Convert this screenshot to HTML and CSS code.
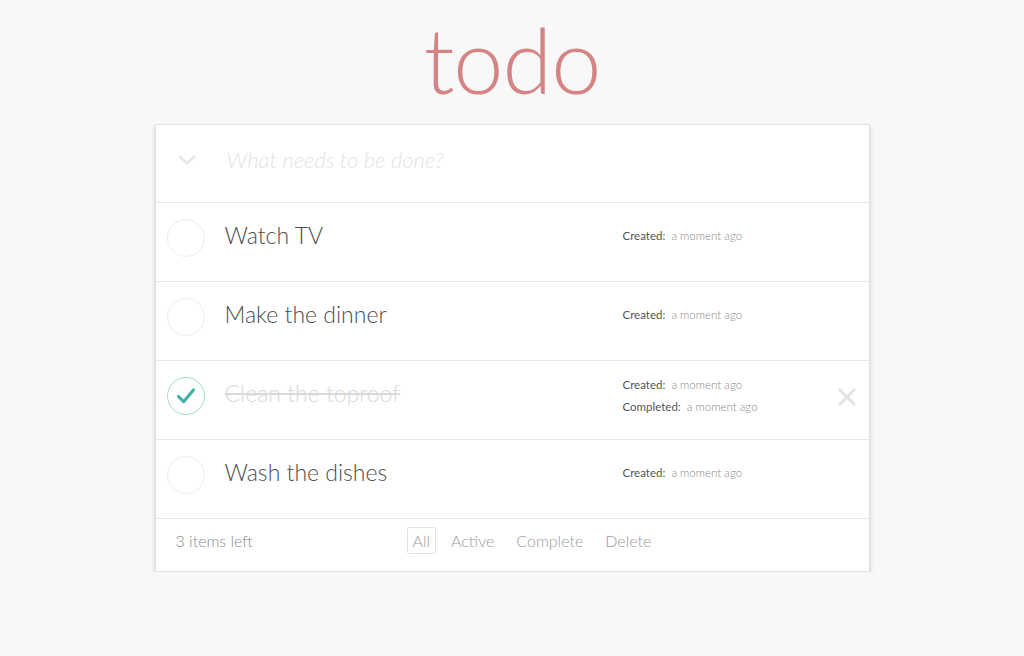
FILE: index.html
```html
<!DOCTYPE html>
<html>
<head>
<meta charset="utf-8">
<link rel="stylesheet" href="styles.css">
</head>
<body>
<div class="app">
  <h1 class="title">todo</h1>
  <section class="card">
    <header class="new-row">
      <span class="toggle-all">
        <svg width="20" height="12" viewBox="0 0 20 12"><path d="M2 2 L10 9 L18 2" fill="none" stroke="#e6e6e6" stroke-width="2.5"/></svg>
      </span>
      <input class="new-todo" placeholder="What needs to be done?">
    </header>
    <ul class="list">
      <li class="item">
        <span class="check"></span>
        <span class="label">Watch TV</span>
        <div class="meta"><div><b>Created:</b> a moment ago</div></div>
        <span class="destroy"></span>
      </li>
      <li class="item">
        <span class="check"></span>
        <span class="label">Make the dinner</span>
        <div class="meta"><div><b>Created:</b> a moment ago</div></div>
        <span class="destroy"></span>
      </li>
      <li class="item done">
        <span class="check on">
          <svg width="38" height="38" viewBox="0 0 38 38"><path d="M11 19.5 L16.5 25 L27 12.5" fill="none" stroke="#3bb3a7" stroke-width="3.2" stroke-linecap="round" stroke-linejoin="round"/></svg>
        </span>
        <span class="label">Clean the toproof</span>
        <div class="meta"><div><b>Created:</b> a moment ago</div><div><b>Completed:</b> a moment ago</div></div>
        <span class="destroy">
          <svg width="22" height="22" viewBox="0 0 22 22"><path d="M3 3 L19 19 M19 3 L3 19" stroke="#e3e3e3" stroke-width="3" fill="none"/></svg>
        </span>
      </li>
      <li class="item">
        <span class="check"></span>
        <span class="label">Wash the dishes</span>
        <div class="meta"><div><b>Created:</b> a moment ago</div></div>
        <span class="destroy"></span>
      </li>
    </ul>
    <footer class="footer">
      <span class="count">3 items left</span>
      <nav class="filters">
        <a class="filter selected">All</a>
        <a class="filter">Active</a>
        <a class="filter">Complete</a>
        <a class="filter">Delete</a>
      </nav>
    </footer>
  </section>
</div>
</body>
</html>
```
FILE: styles.css
```css
html, body { margin: 0; padding: 0; }
body {
  background: #f8f8f8;
  font-family: Lato, "Open Sans", sans-serif;
  color: #4d4d4d;
}
.app {
  width: 715px;
  margin: 0 auto;
  padding-top: 9px;
}
.title {
  margin: 0;
  height: 115px;
  text-align: center;
  font-weight: 300;
  font-size: 90px;
  line-height: 100px;
  color: #d48484;
  letter-spacing: -1px;
}
.card {
  background: #fff;
  border: 1px solid #e3e3e3;
  box-shadow: 0 1px 2px rgba(0,0,0,0.08), 0 4px 5px rgba(0,0,0,0.14);
}
.new-row {
  display: flex;
  align-items: center;
  height: 76px;
  padding-bottom: 1px;
  border-bottom: 1px solid #e6e6e6;
}
.toggle-all {
  width: 60px;
  display: flex;
  justify-content: center;
  padding-left: 1px;
  margin-top: -6px;
}
.new-todo {
  border: 0;
  outline: 0;
  flex: 1;
  margin-left: 8px;
  margin-top: -8px;
  font-family: inherit;
  font-size: 22px;
  font-style: italic;
  font-weight: 300;
  color: #4d4d4d;
  background: transparent;
}
.new-todo::placeholder { color: #e3e3e3; }
.list { list-style: none; margin: 0; padding: 0; }
.item {
  display: flex;
  align-items: center;
  height: 70px;
  padding-bottom: 8px;
  border-bottom: 1px solid #e6e6e6;
}
.check {
  width: 36px;
  height: 36px;
  margin-left: 11px;
  border: 1px solid #ededed;
  border-radius: 50%;
  display: flex;
  align-items: center;
  justify-content: center;
  flex: none;
}
.check svg { width: 36px; height: 36px; }
.check.on { border-color: #a5dcd6; }
.label {
  margin-left: 20px;
  width: 398px;
  font-size: 23px;
  font-weight: 300;
  color: #4d4d4d;
  margin-top: -7px;
}
.done .label { color: #d9d9d9; text-decoration: line-through; }
.meta {
  width: 201px;
  font-size: 11.5px;
  font-weight: 300;
  color: #8a8a8a;
  margin-top: -5px;
}
.done .meta { margin-top: 0px; }
.meta div { line-height: 22px; }
.meta b { font-weight: 400; color: #555; margin-right: 3px; }
.destroy {
  margin-left: 12px;
  width: 22px;
  height: 22px;
  display: flex;
  margin-top: 2px;
}
.footer {
  display: flex;
  align-items: center;
  height: 52px;
}
.count {
  margin-left: 20px;
  width: 231px;
  font-size: 16px;
  font-weight: 300;
  color: #8a8a8a;
  margin-top: -10px;
}
.filters { display: flex; gap: 8px; margin-top: -10px; }
.filter {
  font-size: 16px;
  font-weight: 300;
  color: #9b9b9b;
  padding: 3px 6px;
  border: 1px solid transparent;
  border-radius: 2px;
}
.filter.selected { border-color: #e3e3e3; padding: 3px 5px; }
```
